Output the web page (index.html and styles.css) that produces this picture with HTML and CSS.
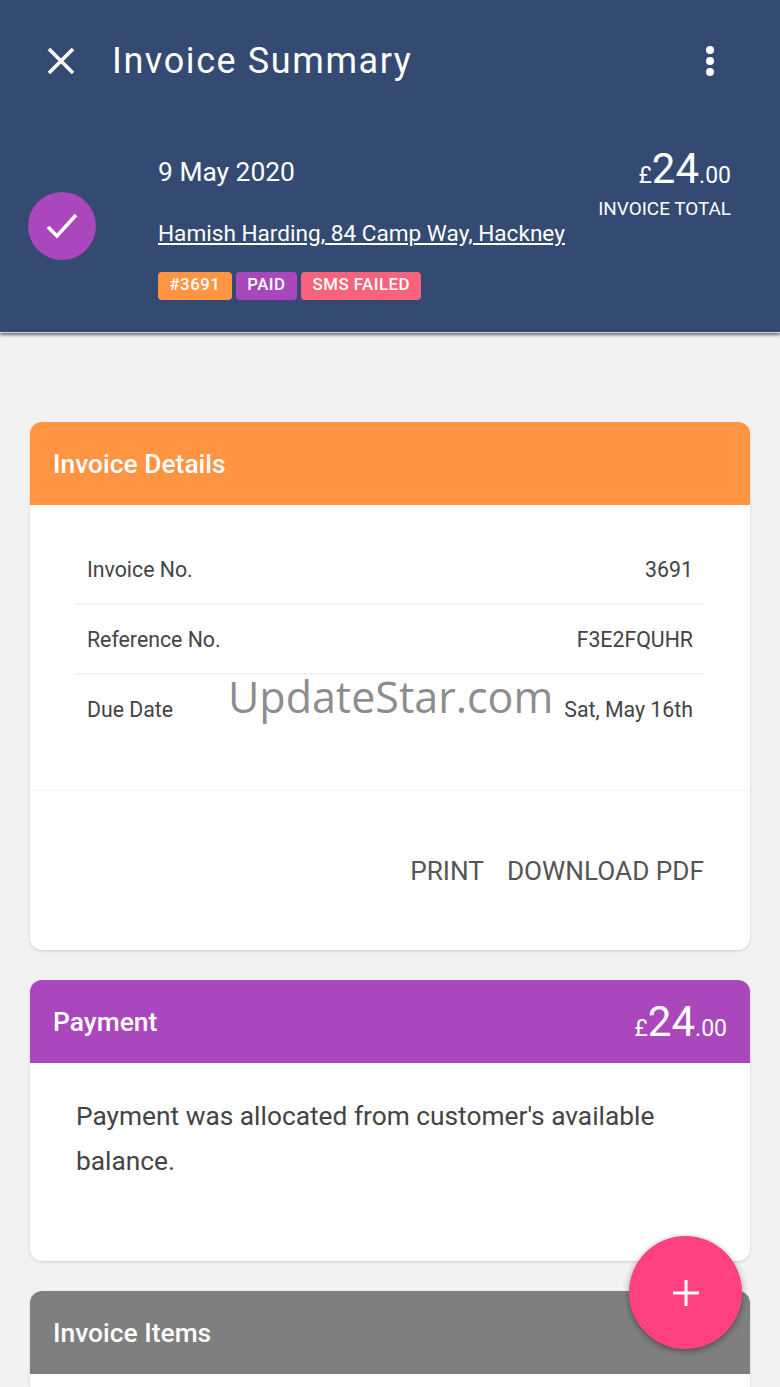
FILE: index.html
```html
<!DOCTYPE html>
<html lang="en">
<head>
    <meta charset="UTF-8">
    <meta name="viewport" content="width=device-width, initial-scale=1.0">
    <title>Invoice Summary</title>
    <link rel="stylesheet" href="styles.css">
</head>
<body>
    <header class="app-header">
        <div class="toolbar">
            <svg class="close-icon" viewBox="0 0 28 28" width="28" height="28">
                <path d="M2 2 L26 26 M26 2 L2 26" stroke="#fff" stroke-width="3.6" fill="none"/>
            </svg>
            <h1 class="toolbar-title">Invoice Summary</h1>
            <svg class="more-icon" viewBox="0 0 10 32" width="10" height="32">
                <circle cx="5" cy="5" r="4" fill="#fff"/>
                <circle cx="5" cy="16" r="4" fill="#fff"/>
                <circle cx="5" cy="27" r="4" fill="#fff"/>
            </svg>
        </div>
        <div class="summary">
            <div class="status-circle">
                <svg viewBox="0 0 32 28" width="32" height="28">
                    <path d="M2 15 L11 24 L30 3" stroke="#fff" stroke-width="3.6" fill="none"/>
                </svg>
            </div>
            <div class="summary-main">
                <div class="summary-date">9 May 2020</div>
                <a class="summary-customer" href="#">Hamish Harding, 84 Camp Way, Hackney</a>
                <div class="tags">
                    <span class="tag tag-orange">#3691</span>
                    <span class="tag tag-purple">PAID</span>
                    <span class="tag tag-red">SMS FAILED</span>
                </div>
            </div>
            <div class="summary-total">
                <div class="amount"><span class="amount-small">£</span><span class="amount-big">24</span><span class="amount-small">.00</span></div>
                <div class="total-label">INVOICE TOTAL</div>
            </div>
        </div>
    </header>

    <main class="content">
        <section class="card">
            <div class="card-header bg-orange">Invoice Details</div>
            <div class="details">
                <div class="detail-row"><span>Invoice No.</span><span>3691</span></div>
                <div class="detail-row"><span>Reference No.</span><span>F3E2FQUHR</span></div>
                <div class="detail-row"><span>Due Date</span><span>Sat, May 16th</span></div>
            </div>
            <div class="card-actions">
                <span>PRINT</span>
                <span>DOWNLOAD PDF</span>
            </div>
        </section>

        <section class="card">
            <div class="card-header bg-purple">
                <span>Payment</span>
                <div class="amount amount-card"><span class="amount-small">£</span><span class="amount-big">24</span><span class="amount-small">.00</span></div>
            </div>
            <p class="payment-text">Payment was allocated from customer's available balance.</p>
        </section>

        <section class="card card-items">
            <div class="card-header bg-grey">Invoice Items</div>
        </section>
    </main>

    <div class="watermark">UpdateStar.com</div>

    <button class="fab">
        <svg viewBox="0 0 26 26" width="26" height="26">
            <path d="M13 0 V26 M0 13 H26" stroke="#fff" stroke-width="3" fill="none"/>
        </svg>
    </button>
</body>
</html>
```

FILE: styles.css
```css
html, body {
    height: 1387px;
    overflow: hidden;
}

body {
    position: relative;
    margin: 0;
    font-family: Roboto, "Liberation Sans", sans-serif;
    background-color: #f2f2f2;
    color: #444;
}

.app-header {
    height: 333px;
    background-color: #344a72;
    color: #fff;
    box-shadow: 0 2px 3px rgba(0, 0, 0, 0.55);
    border-bottom: 1px solid #d5d8dd;
    box-sizing: border-box;
}

.toolbar {
    display: flex;
    align-items: center;
    height: 121px;
    padding: 0 65px 0 47px;
}

.close-icon {
    flex: none;
}

.toolbar-title {
    flex: 1;
    margin: 0 0 0 37px;
    font-size: 36px;
    font-weight: 400;
    letter-spacing: 1.6px;
}

.summary {
    display: flex;
    padding-left: 28px;
    padding-right: 49px;
}

.status-circle {
    flex: none;
    display: flex;
    align-items: center;
    justify-content: center;
    width: 68px;
    height: 68px;
    margin-top: 71px;
    border-radius: 50%;
    background-color: #ab47bc;
}

.summary-main {
    flex: 1;
    margin-left: 62px;
    padding-top: 34px;
}

.summary-date {
    font-size: 26.4px;
    line-height: 34px;
}

.summary-customer {
    display: block;
    margin-top: 30px;
    font-size: 22.6px;
    line-height: 30px;
    color: #fff;
}

.tags {
    display: flex;
    gap: 4px;
    margin-top: 23px;
}

.tag {
    padding: 0 11.5px;
    height: 28px;
    line-height: 25px;
    border-radius: 4px;
    font-size: 16.8px;
    font-weight: 500;
    letter-spacing: 0.5px;
    color: #fff;
}

.tag-orange { background-color: #ff9442; }
.tag-purple { background-color: #ab47bc; }
.tag-red { background-color: #f7627c; }

.summary-total {
    text-align: right;
    padding-top: 24px;
}

.amount {
    white-space: nowrap;
    line-height: 48px;
    font-weight: 400;
}

.amount-card {
    margin-top: 8px;
}

.amount-small {
    font-size: 23px;
}

.amount-big {
    font-size: 42px;
}

.total-label {
    margin-top: -5px;
    font-size: 18.9px;
    line-height: 24px;
}

.content {
    display: flex;
    flex-direction: column;
    gap: 30px;
    padding: 89px 30px 0;
}

.card {
    background-color: #fff;
    border-radius: 12px;
    box-shadow: 0 1px 3px rgba(0, 0, 0, 0.15);
    overflow: hidden;
}

.card-items {
    height: 96px;
    border-radius: 12px 12px 0 0;
}

.card-header {
    display: flex;
    align-items: center;
    justify-content: space-between;
    height: 83px;
    padding: 0 23px;
    font-size: 26.4px;
    font-weight: 500;
    color: #fff;
}

.bg-orange { background-color: #ff9442; }
.bg-purple { background-color: #ab47bc; }
.bg-grey { background-color: #7f7f7f; }

.details {
    padding: 30px 46px 45px;
    border-bottom: 1px solid #f6f6f6;
}

.detail-row {
    display: flex;
    align-items: center;
    justify-content: space-between;
    height: 70px;
    padding: 0 11px;
    font-size: 21.3px;
    box-sizing: border-box;
    border-bottom: 2px solid #f3f3f3;
    color: #444;
}

.detail-row:last-child {
    border-bottom-color: transparent;
}

.card-actions {
    display: flex;
    justify-content: flex-end;
    align-items: center;
    gap: 23px;
    height: 159px;
    padding: 0 46px;
    font-size: 26.2px;
    color: #555;
}

.payment-text {
    margin: 0;
    padding: 31px 46px 77px;
    font-size: 26.3px;
    line-height: 45px;
    color: #444;
}

.watermark {
    position: absolute;
    left: 228px;
    top: 668px;
    font-family: "Open Sans", sans-serif;
    font-size: 43px;
    line-height: 58px;
    color: rgba(110, 110, 110, 0.8);
}

.fab {
    position: absolute;
    left: 629px;
    top: 1236px;
    display: flex;
    align-items: center;
    justify-content: center;
    width: 113px;
    height: 113px;
    padding: 0;
    border: none;
    border-radius: 50%;
    background-color: #ff4081;
    box-shadow: 0 2px 6px rgba(0, 0, 0, 0.4);
}
```
